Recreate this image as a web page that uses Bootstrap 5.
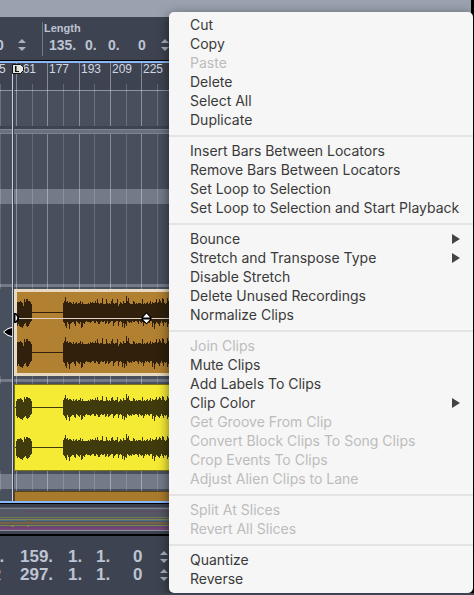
<!DOCTYPE html>
<html lang="en">
<head>
<meta charset="utf-8">
<meta name="viewport" content="width=device-width, initial-scale=1">
<title>Arrange window</title>
<link href="https://cdn.jsdelivr.net/npm/bootstrap@5.3.0/dist/css/bootstrap.min.css" rel="stylesheet">
<style>
  body { background: #3d4350; color: #bdc4d3; font-family: "Liberation Sans", Arial, sans-serif; overflow-x: hidden; }
  .daw { border-right: 3px solid #000; }
  .window-bar { height: 17px; background: #9aa1af; }
  .transport { height: 43px; padding-top: 4px; }
  .field-rule { width: 1px; height: 34px; margin: 1px 1px 0 15px; background: #737a87; }
  .field-label { font-size: 11px; line-height: 14px; }
  .field-values { display: grid; grid-template-columns: 36px 23px 30px 22px 12px; padding: 2px 0 0 5px; font-size: 14px; line-height: 16px; }
  .left-field { padding-top: 16px; font-size: 14px; line-height: 16px; }
  .cut-value { width: 21px; margin-left: -4px; }
  .stepper { width: 10px; padding: 0; border: 0; background: none; line-height: 0; display: block; }
  .stepper svg { display: block; fill: #aab1c0; }
  .edge { border-top: 1px solid #000; border-bottom: 2px solid #8ab8f8; height: 3px; }
  .edge-low { border-top: 2px solid #8ab8f8; border-bottom: 1px solid #000; height: 3px; }

  .arrange { overflow: hidden; }
  .ruler-row { height: 28px; border-bottom: 1px solid #8d94a1; }
  .ruler-text { fill: #d2d7e2; font-size: 12px; }
  .lane { background: #484f5d; }
  .band { background: #747b88; }
  .band-split { background: #697080; border-top: 1px solid #7e8592; border-bottom: 1px solid #7e8592; height: 5px; }
  .h-2 { height: 2px; } .h-3 { height: 3px; } .h-15 { height: 15px; }
  .h-35 { height: 35px; } .h-55 { height: 55px; } .h-80 { height: 80px; }
  .grid-layer { left: 0; top: 0; width: 100%; height: 100%; pointer-events: none; }
  .clip-row { padding-left: 14px; position: relative; z-index: 1; }
  .clip { height: 87px; overflow: hidden; }
  .clip svg { display: block; }
  .clip-brown { background: #b18030; border: 3px solid #e7dac0; color: #30200c; }
  .clip-yellow { background: #f5eb34; border: 1px solid #7c7415; color: #403b0d; }
  .clip-next { height: 10px; background: #a97a2d; border: 1px solid #5d4518; border-bottom: 0; }
  .overlay-layer { left: 0; top: 0; z-index: 2; pointer-events: none; }

  .overview { height: 30px; border-top: 3px solid #39404b; background: #505663; }
  .overview svg { display: block; }
  .locators { border-top: 2px solid #000; padding-top: 12px; height: 59px; }
  .locator-line { display: grid; grid-template-columns: 20px 48px 28px 37px 26px 12px; font-size: 17px; line-height: 18px; }
  .locator-line .tag { margin-left: -11px; }

  .context-menu { left: 169px; top: 12px; width: 304px; padding: 4px 0; border: 0; border-radius: 5px; background: #f6f6f6; z-index: 10;
    box-shadow: 0 3px 12px rgba(0,0,0,.55); font-family: Inter, "Liberation Sans", sans-serif; }
  .context-menu .dropdown-item { padding: 0 13px 2px 21px; font-size: 14px; line-height: 17px; color: #3a3a3a; }
  .context-menu .dropdown-item:disabled { color: #bcbcbc; }
  .context-menu .dropdown-divider { margin: 5px 0; border-top: 2px solid #e4e4e4; opacity: 1; }
</style>
<script src="https://cdn.jsdelivr.net/npm/bootstrap@5.3.0/dist/js/bootstrap.bundle.min.js"></script>
</head>
<body>
<main class="daw position-relative">
  <div class="window-bar"></div>

  <section class="transport d-flex align-items-start fw-bold" aria-label="Transport">
    <div class="left-field d-flex align-items-center">
      <span class="cut-value">0</span>
      <button class="stepper" aria-label="Step position"><svg width="10" height="14"><path d="M1 5 5 1 9 5zM1 9 5 13 9 9z"/></svg></button>
    </div>
    <div class="field-rule"></div>
    <div class="flex-shrink-0">
      <div class="field-label" id="len">Length</div>
      <div class="field-values align-items-center" role="group" aria-labelledby="len">
        <span>135.</span><span>0.</span><span>0.</span><span>0</span>
        <button class="stepper" aria-label="Step length"><svg width="10" height="14"><path d="M1 5 5 1 9 5zM1 9 5 13 9 9z"/></svg></button>
      </div>
    </div>
  </section>
  <div class="edge"></div>

  <section class="arrange position-relative" aria-label="Arrangement">
    <svg class="grid-layer position-absolute" id="grid"></svg>
    <div class="ruler-row"></div>
    <div class="lane h-35"></div><div class="h-3"></div>
    <div class="band-split"></div>
    <div class="lane h-55"></div>
    <div class="band h-15"></div>
    <div class="lane h-80"></div>
    <div class="band h-3"></div>
    <div class="lane h-2"></div>
    <div class="lane clip-row"><div class="clip clip-brown"><svg width="460" height="81"><g fill="currentColor" class="wave" data-x="-17" data-scale="1.25" data-mid="20,60"></g></svg></div></div>
    <div class="lane h-3"></div>
    <div class="band h-3"></div>
    <div class="lane h-2"></div>
    <div class="lane clip-row"><div class="clip clip-yellow"><svg width="460" height="85"><g fill="currentColor" class="wave" data-x="-15" data-scale="1" data-mid="22,62"></g></svg></div></div>
    <div class="lane h-3"></div>
    <div class="band h-15"></div>
    <div class="lane h-2"></div>
    <div class="lane clip-row"><div class="clip-next"></div></div>
    <svg class="overlay-layer position-absolute" width="170" height="438">
      <path d="M12.500 9V438" stroke="#cbd1e2"/>
      <path d="M13.500 19V438" stroke="#383e4a"/>
      <path d="M17 255.500H170" stroke="#ded3c6"/>
      <path d="M12.500 1.500H20.500L23.500 4V7.500L20.500 10.500H12.500z" fill="#e4e4e0" stroke="#111"/>
      <path d="M15 3H16.500V8H19V9H15z" fill="#111"/>
      <path d="M14 250h2l3 3v4l-3 3h-2z" fill="#000"/><path d="M15.500 251.500Q19 255 15.500 258.500z" fill="#fff"/>
      <path d="M3.500 269 12 264.500V273.500z" fill="#000"/><path d="M12 264.500 8 265.500 3.500 269 8 272.500 12 273.500" fill="none" stroke="#fff"/>
      <path d="M146.500 249 151.500 254.500V256.500L146.500 261.500 141.500 256.500V254.500z" fill="#000"/>
      <path d="M146.500 250.500 150 254.500H143zM143 256.500H150L146.500 260z" fill="#fff"/>
    </svg>
  </section>
  <div class="edge-low"></div>

  <div class="overview" aria-label="Overview">
    <svg width="100%" height="27">
      <rect width="100%" height="27" fill="#525864"/>
      <rect y="1" width="100%" height="1" fill="#7a8190"/>
      <rect y="4" x="24" width="100%" height="1" fill="#5d4c63"/>
      <rect y="6" width="100%" height="1" fill="#5d5565"/>
      <rect y="10" width="100%" height="1" fill="#77775a"/>
      <rect y="12" width="100%" height="1" fill="#7e8553"/>
      <rect y="13" width="100%" height="1" fill="#4a7184"/>
      <rect y="15" width="100%" height="2" fill="#776044"/>
      <rect y="18" width="100%" height="1" fill="#7d8649"/>
      <rect y="19" width="100%" height="2" fill="#6b4674"/>
      <rect y="21" width="100%" height="2" fill="#764677"/>
      <rect y="23" width="100%" height="1" fill="#8b929f"/>
      <rect y="24" width="100%" height="3" fill="#3d4350"/>
      <path d="M11 19h3M27 19h2" stroke="#999327"/><path d="M28 13.500h3" stroke="#715c38"/>
    </svg>
  </div>

  <section class="locators fw-bold" aria-label="Locators">
    <div class="locator-line align-items-center"><span class="tag">L.</span><span>159.</span><span>1.</span><span>1.</span><span>0</span>
      <button class="stepper" aria-label="Step left locator"><svg width="10" height="14"><path d="M1 5 5 1 9 5zM1 9 5 13 9 9z"/></svg></button></div>
    <div class="locator-line align-items-center"><span class="tag">R</span><span>297.</span><span>1.</span><span>1.</span><span>0</span>
      <button class="stepper" aria-label="Step right locator"><svg width="10" height="14"><path d="M1 5 5 1 9 5zM1 9 5 13 9 9z"/></svg></button></div>
  </section>

  <ul class="context-menu dropdown-menu show position-absolute">
    <li><button class="dropdown-item">Cut</button></li>
    <li><button class="dropdown-item">Copy</button></li>
    <li><button class="dropdown-item" disabled>Paste</button></li>
    <li><button class="dropdown-item">Delete</button></li>
    <li><button class="dropdown-item">Select All</button></li>
    <li><button class="dropdown-item">Duplicate</button></li>
    <li><hr class="dropdown-divider"></li>
    <li><button class="dropdown-item">Insert Bars Between Locators</button></li>
    <li><button class="dropdown-item">Remove Bars Between Locators</button></li>
    <li><button class="dropdown-item">Set Loop to Selection</button></li>
    <li><button class="dropdown-item">Set Loop to Selection and Start Playback</button></li>
    <li><hr class="dropdown-divider"></li>
    <li><button class="dropdown-item d-flex justify-content-between align-items-center">Bounce<svg width="8" height="10"><path d="M0 0 8 5 0 10z" fill="#444"/></svg></button></li>
    <li><button class="dropdown-item d-flex justify-content-between align-items-center">Stretch and Transpose Type<svg width="8" height="10"><path d="M0 0 8 5 0 10z" fill="#444"/></svg></button></li>
    <li><button class="dropdown-item">Disable Stretch</button></li>
    <li><button class="dropdown-item">Delete Unused Recordings</button></li>
    <li><button class="dropdown-item">Normalize Clips</button></li>
    <li><hr class="dropdown-divider"></li>
    <li><button class="dropdown-item" disabled>Join Clips</button></li>
    <li><button class="dropdown-item">Mute Clips</button></li>
    <li><button class="dropdown-item">Add Labels To Clips</button></li>
    <li><button class="dropdown-item d-flex justify-content-between align-items-center">Clip Color<svg width="8" height="10"><path d="M0 0 8 5 0 10z" fill="#444"/></svg></button></li>
    <li><button class="dropdown-item" disabled>Get Groove From Clip</button></li>
    <li><button class="dropdown-item" disabled>Convert Block Clips To Song Clips</button></li>
    <li><button class="dropdown-item" disabled>Crop Events To Clips</button></li>
    <li><button class="dropdown-item" disabled>Adjust Alien Clips to Lane</button></li>
    <li><hr class="dropdown-divider"></li>
    <li><button class="dropdown-item" disabled>Split At Slices</button></li>
    <li><button class="dropdown-item" disabled>Revert All Slices</button></li>
    <li><hr class="dropdown-divider"></li>
    <li><button class="dropdown-item">Quantize</button></li>
    <li><button class="dropdown-item">Reverse</button></li>
  </ul>
</main>
<script>
  // Bar lines: [x, label]; unlabelled entries are the half-way lines.
  const bars = [[0], [16, "161"], [32], [47, "177"], [63], [79, "193"], [94], [110, "209"], [126], [141, "225"], [157]];
  let g = '<text class="ruler-text" x="-1" y="10">5</text>';
  for (const [x, label] of bars) {
    g += `<rect x="${x}" y="${label ? 0 : 21}" width="1" height="${label ? 63 : 42}" fill="#fff" fill-opacity="${label ? .38 : .2}"/>`;
    g += `<rect x="${x}" y="71" width="1" height="100%" fill="#fff" fill-opacity="${label ? .34 : .16}"/>`;
    if (label) g += `<text class="ruler-text" x="${label === "161" ? 16 : x + 2}" y="10">${label}</text>`;
  }
  document.getElementById("grid").innerHTML = g;

  // Peak heights, one character per pixel column (base 36).
  const runs = [
    { x: 16, up: "68889875a8aa9986", down: "8a9abbca98aba976" },
    { x: 63, up: "79c8978876867867796866666768787797a7677b666a76769a7677a56876977d9b7666986767776a6767867968778a78a97ba767b9" +
             "78878798786", down: "78ac79d98779a67897cb897677787668867997677698698766a8766a767b8c9a6787867766796787a86767866b8d9789a868a787b9" + "78878798786" }
  ];
  for (const el of document.querySelectorAll(".wave")) {
    const dx = +el.dataset.x, s = +el.dataset.scale;
    let out = "";
    for (const mid of el.dataset.mid.split(",").map(Number)) {
      out += `<rect x="0" y="${mid}" width="${63 + dx}" height="1"/>`;
      for (const r of runs) [...r.up].forEach((c, i) => {
        const u = Math.round(parseInt(c, 36) * s), d = Math.round(parseInt(r.down[i] || "8", 36) * s);
        out += `<rect x="${r.x + dx + i}" y="${mid - u}" width="1" height="${u + d + 1}"/>`;
      });
    }
    el.innerHTML = out;
  }
</script>
</body>
</html>
